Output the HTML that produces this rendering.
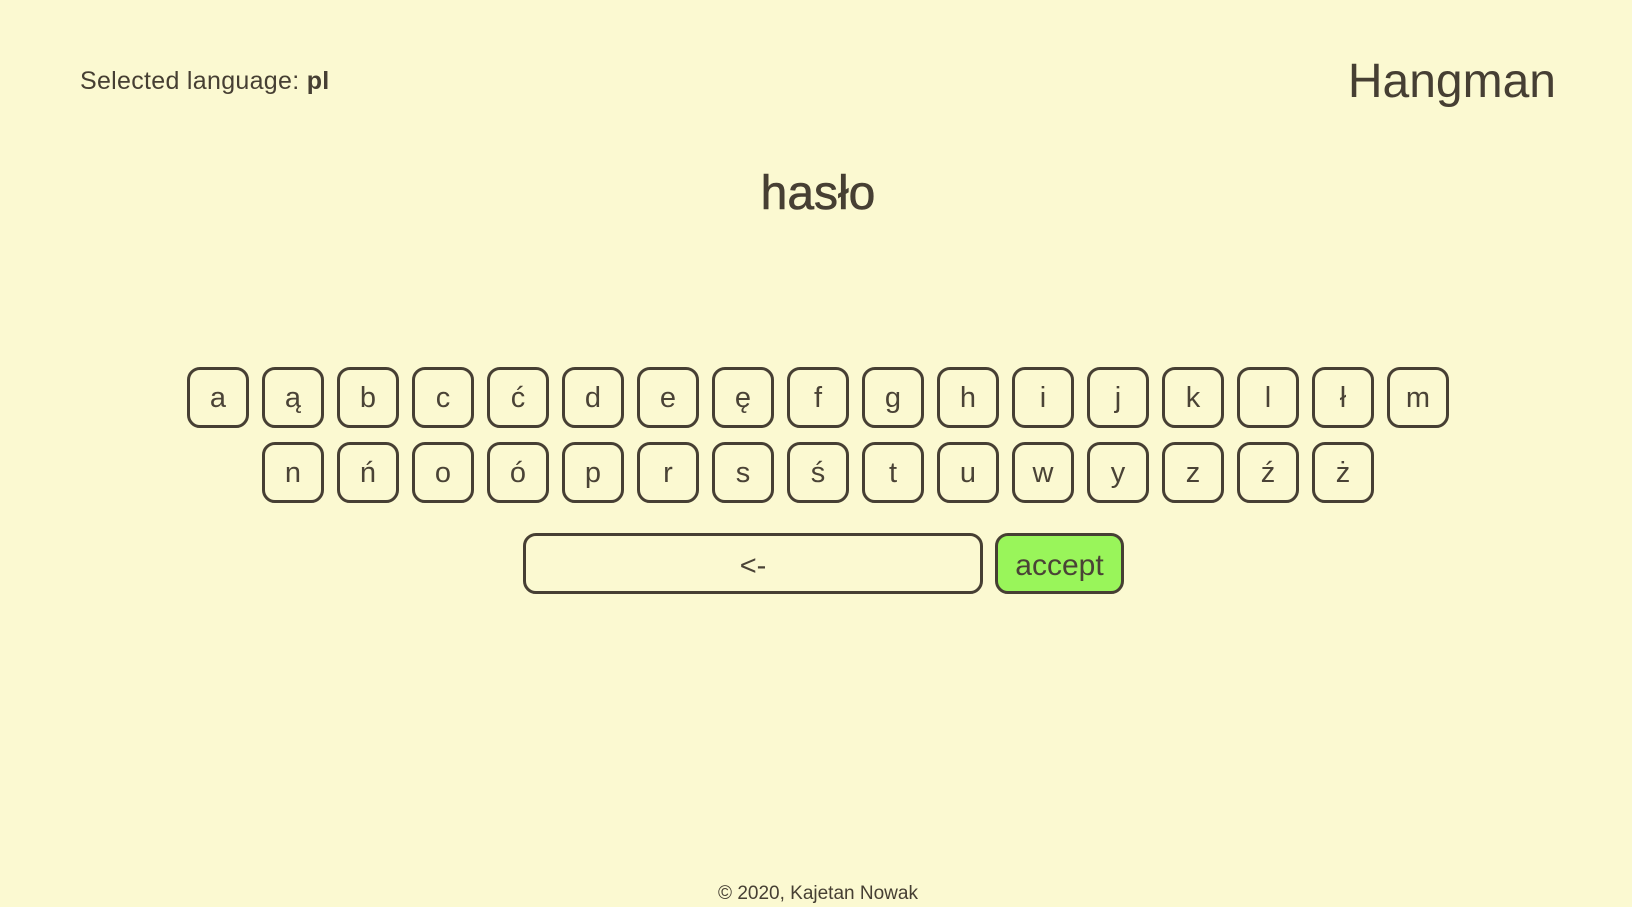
<!DOCTYPE html>
<html><head><meta charset="utf-8"><style>
body{margin:0;width:1632px;height:907px;background:#fbf9d1;font-family:"Liberation Sans","DejaVu Sans",sans-serif;color:#463f33;position:relative;overflow:hidden}
.abs{position:absolute}
.key{position:absolute;width:56px;height:55px;border:3px solid #463f33;border-radius:13px;box-sizing:content-box;text-align:center;line-height:57px;font-size:29px;font-weight:300;color:#4a4336}
</style></head><body>
<div class="abs" style="left:80px;top:67px;font-size:25px;letter-spacing:0.3px">Selected language: <b>pl</b></div>
<div class="abs" style="right:76px;top:54px;font-size:48px;">Hangman</div>
<div class="abs" style="left:0;width:1636px;text-align:center;top:166px;font-size:48px;-webkit-text-stroke:0.6px #463f33">hasło</div>
<div id="k"></div>
<div class="key" style="left:523px;top:533px;width:454px;height:55px;line-height:60px;">&lt;-</div>
<div class="key" style="left:995px;top:533px;width:123px;height:55px;line-height:60px;background:#99f55a;font-size:30px;">accept</div>
<div class="abs" style="left:0;width:1636px;text-align:center;top:883px;font-size:19px;">© 2020, Kajetan Nowak</div>
<script>
var r1="aąbcćdeęfghijklłm".split(""),r2="nńoóprsśtuwyzźż".split("");
var h="";r1.forEach(function(c,i){h+='<div class="key" style="left:'+(187+i*75)+'px;top:367px">'+c+'</div>'});
r2.forEach(function(c,i){h+='<div class="key" style="left:'+(262+i*75)+'px;top:442px">'+c+'</div>'});
document.getElementById("k").innerHTML=h;
</script>
</body></html>
